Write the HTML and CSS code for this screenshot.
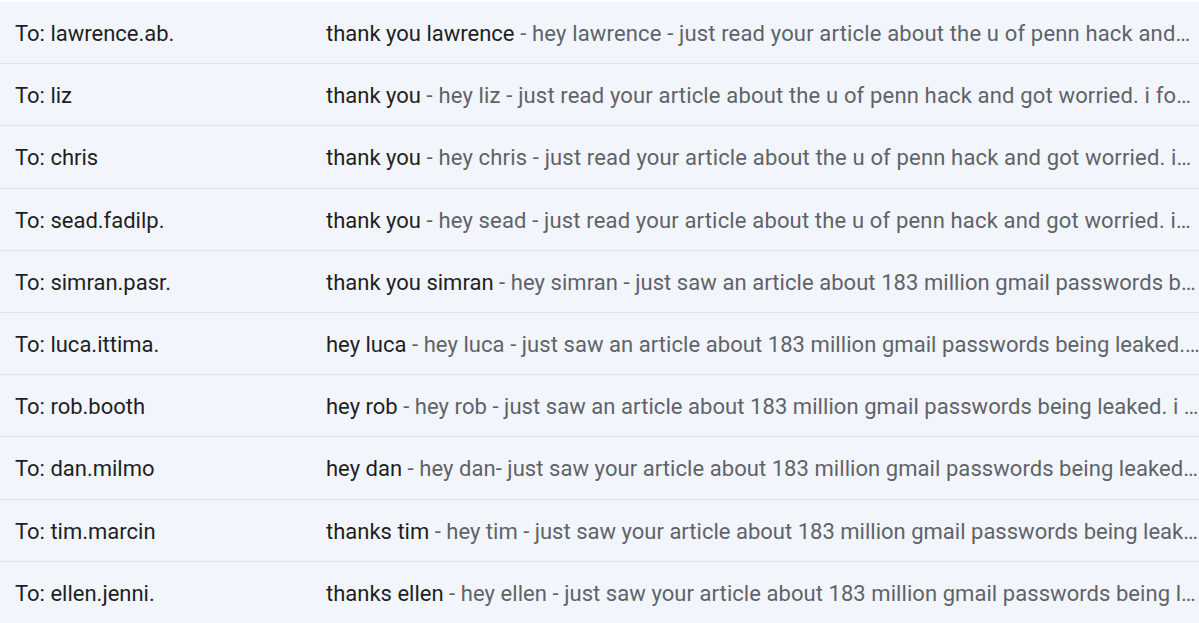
FILE: index.html
```html
<!DOCTYPE html>
<html>
<head>
<meta charset="utf-8">
<link rel="stylesheet" href="styles.css">
</head>
<body>
<div class="list">
  <div class="row"><div class="to">To: lawrence.ab.</div><div class="line"><span class="subj">thank you lawrence</span><span class="snip"> - hey lawrence - just read your article about the u of penn hack and…</span></div></div>
  <div class="row"><div class="to">To: liz</div><div class="line"><span class="subj">thank you</span><span class="snip"> - hey liz - just read your article about the u of penn hack and got worried. i fo…</span></div></div>
  <div class="row"><div class="to">To: chris</div><div class="line"><span class="subj">thank you</span><span class="snip"> - hey chris - just read your article about the u of penn hack and got worried. i…</span></div></div>
  <div class="row"><div class="to">To: sead.fadilp.</div><div class="line"><span class="subj">thank you</span><span class="snip"> - hey sead - just read your article about the u of penn hack and got worried. i…</span></div></div>
  <div class="row"><div class="to">To: simran.pasr.</div><div class="line"><span class="subj">thank you simran</span><span class="snip snip-tight"> - hey simran - just saw an article about 183 million gmail passwords b…</span></div></div>
  <div class="row"><div class="to">To: luca.ittima.</div><div class="line"><span class="subj">hey luca</span><span class="snip snip-tight"> - hey luca - just saw an article about 183 million gmail passwords being leaked.…</span></div></div>
  <div class="row"><div class="to">To: rob.booth</div><div class="line"><span class="subj">hey rob</span><span class="snip snip-tight"> - hey rob - just saw an article about 183 million gmail passwords being leaked. i …</span></div></div>
  <div class="row"><div class="to">To: dan.milmo</div><div class="line"><span class="subj">hey dan</span><span class="snip snip-tight"> - hey dan- just saw your article about 183 million gmail passwords being leaked…</span></div></div>
  <div class="row"><div class="to">To: tim.marcin</div><div class="line"><span class="subj">thanks tim</span><span class="snip snip-tighter"> - hey tim - just saw your article about 183 million gmail passwords being leak…</span></div></div>
  <div class="row"><div class="to">To: ellen.jenni.</div><div class="line"><span class="subj">thanks ellen</span><span class="snip snip-tight"> - hey ellen - just saw your article about 183 million gmail passwords being l…</span></div></div>
</div>
</body>
</html>
```
FILE: styles.css
```css
html, body {
  margin: 0;
  padding: 0;
  background: #ffffff;
}
body {
  padding-top: 2px;
  font-family: Roboto, "Noto Sans", Arial, sans-serif;
  font-size: 22px;
  color: #1f1f1f;
}
.list {
  background: #f2f6fc;
}
.row {
  display: flex;
  align-items: center;
  height: 62.2px;
  padding-top: 2px;
  border-bottom: 1px solid #dde3ea;
  box-sizing: border-box;
}
.row:last-child {
  border-bottom: none;
  height: 61px;
}
.to {
  flex: 0 0 311px;
  padding-left: 15px;
  white-space: nowrap;
  overflow: hidden;
}
.line {
  flex: 1;
  min-width: 0;
  white-space: nowrap;
  overflow: hidden;
  color: #5f6368;
}
.subj {
  color: #1f1f1f;
}
.snip {
  color: #5f6368;
  letter-spacing: 0.16px;
}
.snip-tight {
  letter-spacing: 0.06px;
}
.snip-tighter {
  letter-spacing: 0.01px;
}
```
